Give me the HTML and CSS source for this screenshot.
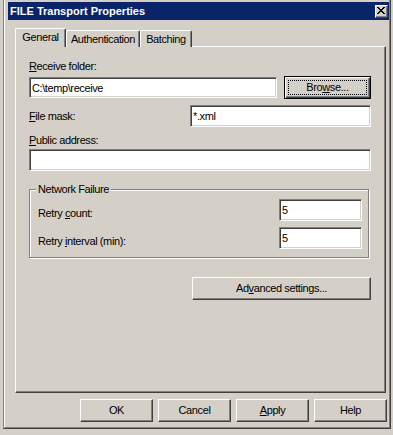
FILE: index.html
```html
<!DOCTYPE html>
<html>
<head>
<meta charset="utf-8">
<title>FILE Transport Properties</title>
<link rel="stylesheet" href="styles.css">
</head>
<body>
<div class="window">
  <div class="frame">
    <div class="titlebar">
      <span class="title">FILE Transport Properties</span>
      <span class="close">
        <svg width="8" height="7" viewBox="0 0 8 7" shape-rendering="crispEdges"><path fill="#000" d="M0 0h2v1H0zM6 0h2v1H6zM1 1h2v1H1zM5 1h2v1H5zM2 2h4v1H2zM3 3h2v1H3zM2 4h4v1H2zM1 5h2v1H1zM5 5h2v1H5zM0 6h2v1H0zM6 6h2v1H6z"/></svg>
      </span>
    </div>
    <div class="tabs">
      <div class="tab tab-general selected">General</div>
      <div class="tab tab-auth">Authentication</div>
      <div class="tab tab-batch">Batching</div>
    </div>
    <div class="panel">
      <div class="label"><u>R</u>eceive folder:</div>
      <div class="row row-folder">
        <input class="field field-folder" type="text" value="C:\temp\receive">
        <button class="btn btn-browse focused"><span class="focus-rect">Bro<u>w</u>se...</span></button>
      </div>
      <div class="row row-mask">
        <span class="label"><u>F</u>ile mask:</span>
        <input class="field field-mask" type="text" value="*.xml">
      </div>
      <div class="label label-public"><u>P</u>ublic address:</div>
      <input class="field field-public" type="text" value="">
      <div class="group">
        <div class="group-title">Network Failure</div>
        <div class="row row-retry">
          <span class="label label-retry">Retry <u>c</u>ount:</span>
          <input class="field field-num" type="text" value="5">
        </div>
        <div class="row row-retry row-interval">
          <span class="label label-retry">Retry <u>i</u>nterval (min):</span>
          <input class="field field-num" type="text" value="5">
        </div>
      </div>
      <div class="adv-row">
        <button class="btn btn-adv">Ad<u>v</u>anced settings...</button>
      </div>
    </div>
    <div class="actions">
      <button class="btn btn-action">OK</button>
      <button class="btn btn-action">Cancel</button>
      <button class="btn btn-action"><u>A</u>pply</button>
      <button class="btn btn-action">Help</button>
    </div>
  </div>
</div>
</body>
</html>
```
FILE: styles.css
```css
* {
  box-sizing: border-box;
}

body {
  margin: 0;
  background: #d4d0c8;
  font-family: "Liberation Sans", Arial, sans-serif;
  font-size: 11px;
  line-height: 13px;
  letter-spacing: -0.4px;
  color: #000;
}

.window {
  margin-left: 3px;
  width: 388px;
  border-left: 1px solid #808080;
  border-right: 1px solid #404040;
  border-bottom: 1px solid #404040;
}

.frame {
  border-left: 1px solid #fff;
  border-right: 1px solid #808080;
  border-bottom: 1px solid #808080;
  padding: 2px 0 5px 3px;
}

.titlebar {
  height: 18px;
  background: #0a246a;
  display: flex;
  align-items: center;
  justify-content: space-between;
  padding: 0 1px 0 2px;
}

.title {
  color: #fff;
  font-weight: bold;
  letter-spacing: 0;
}

.close {
  width: 13px;
  height: 13px;
  background: #d4d0c8;
  border: 1px solid;
  border-color: #fff #404040 #404040 #fff;
  box-shadow: inset -1px -1px 0 #808080;
  display: flex;
  align-items: center;
  justify-content: center;
  padding-right: 1px;
  padding-bottom: 1px;
}

.close svg {
  display: block;
}

.tabs {
  display: flex;
  align-items: flex-end;
  height: 19px;
  margin: 8px 0 -1px 7px;
}

.tab {
  height: 17px;
  padding-top: 2px;
  text-align: center;
  background: #d4d0c8;
  border: 1px solid;
  border-bottom: 0;
  border-color: #fff #404040 #fff #fff;
  box-shadow: inset -1px 0 0 #808080;
  border-radius: 2px 2px 0 0;
}

.tab.selected {
  height: 19px;
  position: relative;
  z-index: 1;
}

.tab-general {
  width: 51px;
}

.tab-auth {
  width: 74px;
}

.tab-batch {
  width: 52px;
}

.panel {
  margin-left: 7px;
  width: 371px;
  height: 347px;
  border: 1px solid;
  border-color: #fff #404040 #404040 #fff;
  box-shadow: inset -1px -1px 0 #808080;
  padding: 13px 14px 0 13px;
}

.label {
  white-space: nowrap;
}

.row {
  display: flex;
  align-items: center;
}

.row-folder {
  margin-top: 3px;
  gap: 7px;
  height: 23px;
}

.field {
  margin: 0;
  font: inherit;
  letter-spacing: inherit;
  color: #000;
  background: #fff;
  border: 1px solid;
  border-color: #808080 #fff #fff #808080;
  box-shadow: inset 1px 1px 0 #404040, inset -1px -1px 0 #d4d0c8;
  padding: 0 1px 0 2px;
  outline: none;
}

.field-folder {
  width: 248px;
  height: 21px;
}

.btn {
  margin: 0;
  padding: 0;
  font: inherit;
  letter-spacing: inherit;
  color: #000;
  background: #d4d0c8;
  border: 1px solid;
  border-color: #fff #404040 #404040 #fff;
  box-shadow: inset -1px -1px 0 #808080;
  display: flex;
  align-items: center;
  justify-content: center;
}

.btn-browse {
  width: 87px;
  height: 23px;
}

.btn.focused {
  border-color: #000;
  box-shadow: inset 1px 1px 0 #fff, inset -1px -1px 0 #404040, inset -2px -2px 0 #808080;
  align-items: stretch;
}

.focus-rect {
  flex: 1;
  margin: 3px;
  border: 1px dotted #000;
  display: flex;
  align-items: center;
  justify-content: center;
}

.row-mask {
  margin-top: 6px;
  justify-content: space-between;
}

.field-mask {
  width: 181px;
  height: 22px;
}

.label-public {
  margin-top: 7px;
}

.field-public {
  display: block;
  width: 342px;
  height: 22px;
  margin-top: 2px;
}

.group {
  margin-top: 18px;
  width: 340px;
  padding: 0 6px 8px 8px;
  border: 1px solid #808080;
  box-shadow: inset 1px 1px 0 #fff, 1px 1px 0 #fff;
}

.group-title {
  display: table;
  margin: -7px 0 0 -2px;
  padding: 0 2px;
  background: #d4d0c8;
}

.row-retry {
  margin-top: 3px;
  justify-content: space-between;
}

.row-interval {
  margin-top: 6px;
}

.label-retry {
  padding-top: 6px;
}

.field-num {
  width: 83px;
  height: 22px;
}

.adv-row {
  display: flex;
  justify-content: flex-end;
  margin-top: 19px;
}

.btn-adv {
  width: 179px;
  height: 23px;
}

.actions {
  display: flex;
  justify-content: flex-end;
  gap: 5px;
  margin-top: 6px;
  padding-right: 2px;
}

.btn-action {
  width: 73px;
  height: 23px;
}
```
